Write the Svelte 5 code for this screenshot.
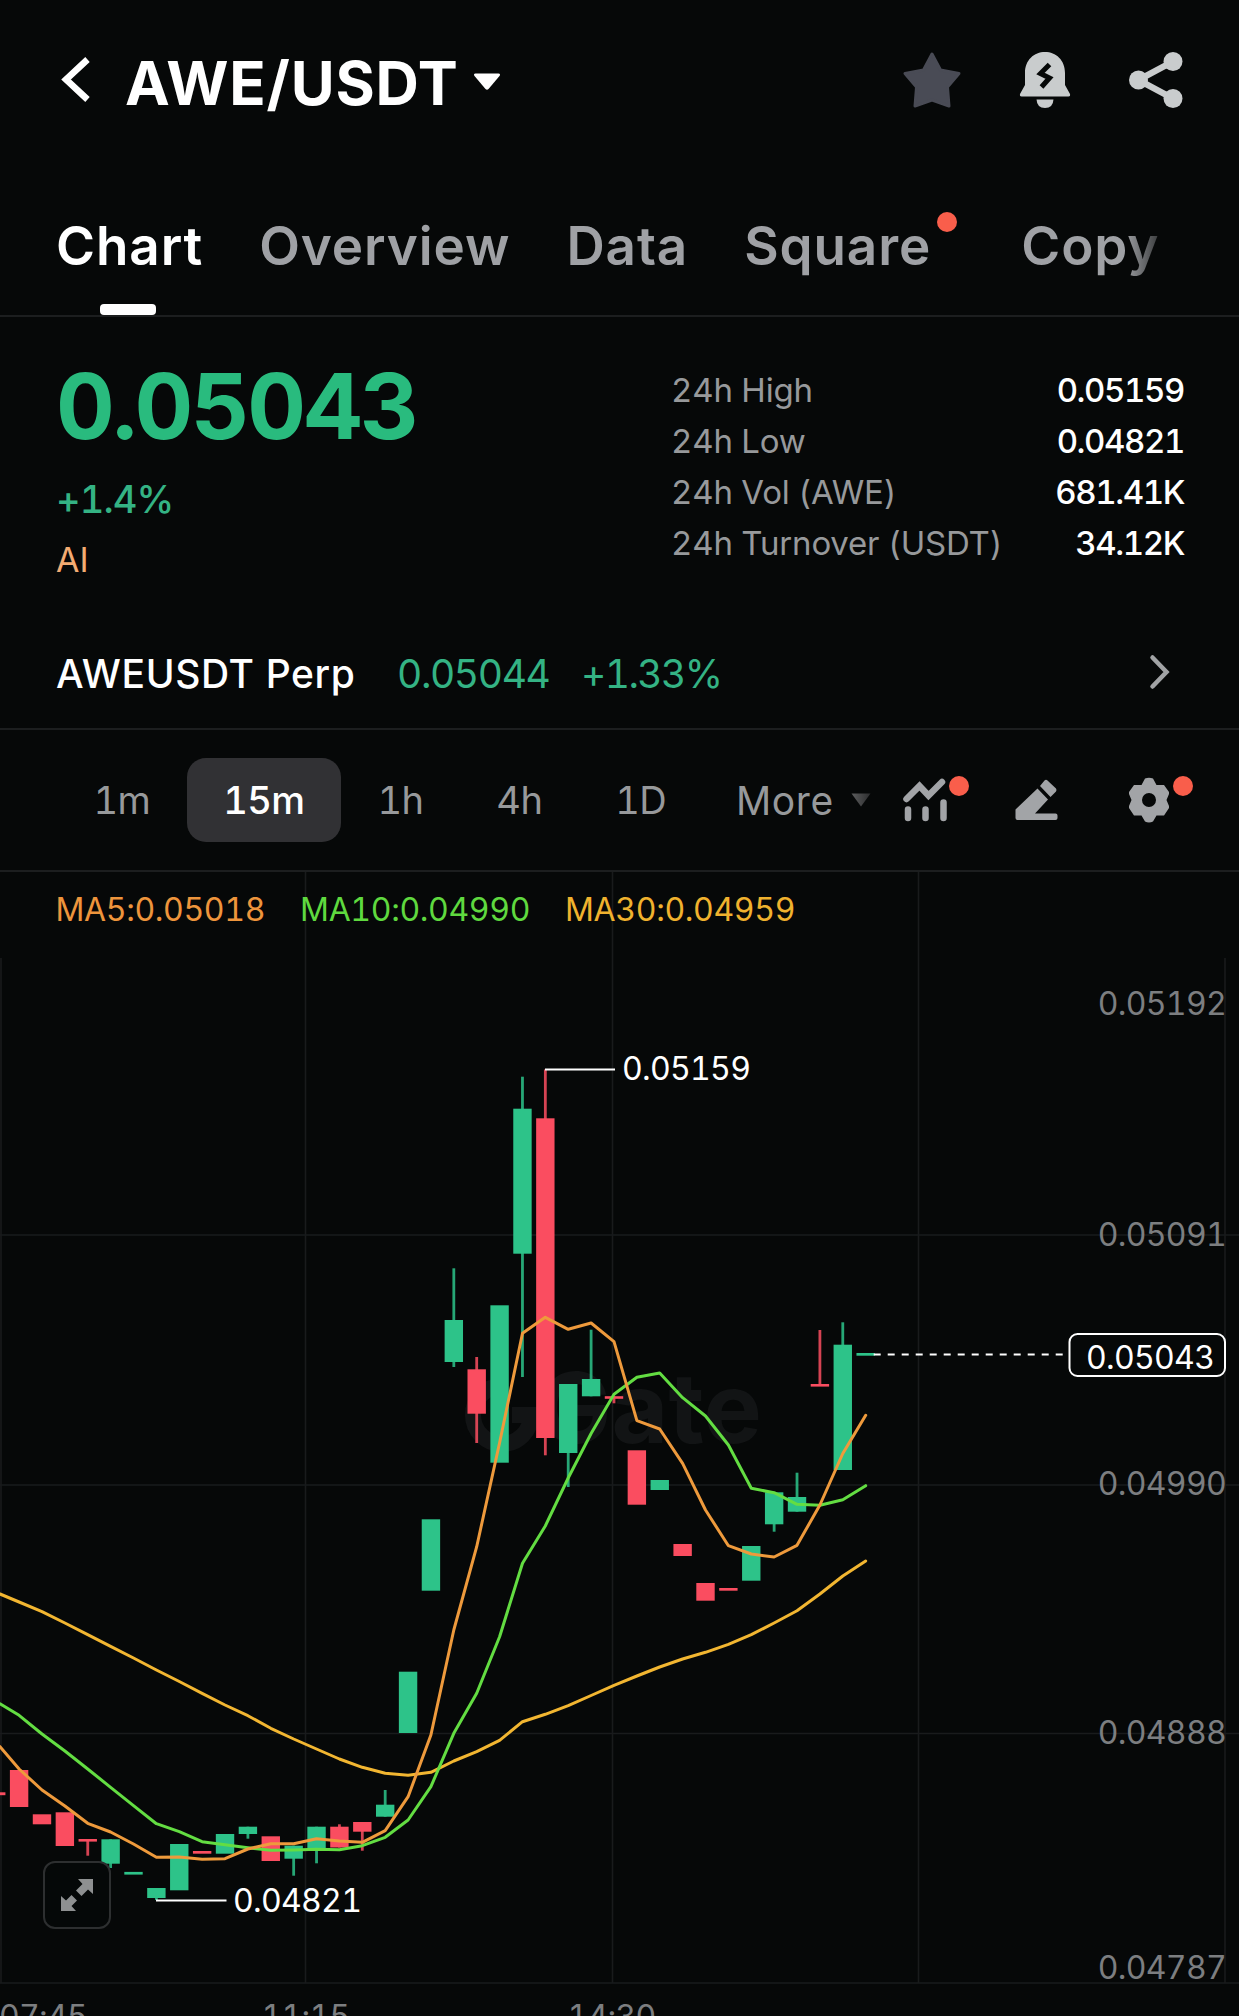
<script>
  const tabs = [
    { name: 'Chart', active: true },
    { name: 'Overview' },
    { name: 'Data' },
    { name: 'Square', dot: true },
    { name: 'Copy', fade: true }
  ];

  const stats = [
    { label: '24h High', value: '0.05159' },
    { label: '24h Low', value: '0.04821' },
    { label: '24h Vol (AWE)', value: '681.41K' },
    { label: '24h Turnover (USDT)', value: '34.12K' }
  ];

  const intervals = ['1m', '15m', '1h', '4h', '1D'];
  let selected = $state('15m');

  const TOP = 872;
  const START = 19.1;
  const STEP = 22.88;
  const BODY = 18.4;

  // [index, up, bodyTop, bodyBottom, wickTop, wickBottom]
  const candles = [
    [-1, 0, 1792.3, 1795.2],
    [0, 0, 1770, 1807],
    [1, 0, 1814.3, 1824.3],
    [2, 0, 1812.3, 1846],
    [3, 0, 1839, 1841.6, 1839, 1855.7],
    [4, 1, 1839.3, 1863.7, 1839.3, 1868],
    [5, 1, 1871.9, 1874.6],
    [6, 1, 1888, 1898, 1888, 1900],
    [7, 1, 1844, 1890.3],
    [8, 0, 1851, 1853.7],
    [9, 1, 1834, 1853.7],
    [10, 1, 1826.7, 1834, 1826.7, 1838.7],
    [11, 0, 1836.3, 1861],
    [12, 1, 1845.7, 1858.7, 1845.7, 1875.7],
    [13, 1, 1826.7, 1849, 1826.7, 1863.3],
    [14, 0, 1826.7, 1847.5, 1824.3, 1847.5],
    [15, 0, 1822, 1831.7, 1822, 1850.7],
    [16, 1, 1804.7, 1816.7, 1790, 1816.7],
    [17, 1, 1671.7, 1733],
    [18, 1, 1519.3, 1590.7],
    [19, 1, 1320, 1362, 1268.3, 1367],
    [20, 0, 1369.3, 1413.7, 1357, 1443],
    [21, 1, 1305.3, 1462.7],
    [22, 1, 1108.7, 1253.7, 1076.7, 1377],
    [23, 0, 1118.3, 1438, 1069.5, 1455.3],
    [24, 1, 1384, 1453, 1384, 1487],
    [25, 1, 1379, 1396.3, 1329.7, 1396.3],
    [26, 0, 1396.2, 1398.8, 1396.2, 1403.3],
    [27, 0, 1450.3, 1504.7],
    [28, 1, 1480, 1490],
    [29, 0, 1544, 1556],
    [30, 0, 1583, 1600.7],
    [31, 0, 1588, 1590.7],
    [32, 1, 1546, 1580.7],
    [33, 1, 1492.3, 1524.3, 1492.3, 1531.7],
    [34, 1, 1497, 1511.7, 1472.7, 1511.7],
    [35, 0, 1384, 1386.6, 1330, 1386],
    [36, 1, 1344.7, 1470, 1322.3, 1470],
    [37, 1, 1353, 1355.7]
  ];

  const ma5 = [
    1746.7, 1769, 1790, 1806, 1823.3, 1832, 1844, 1857.3, 1857, 1859.3, 1858.7, 1849, 1843.7, 1843.7,
    1838.7, 1841, 1842.3, 1830.7, 1796.7, 1735, 1630, 1546.7, 1442.7, 1333.3, 1317.3, 1329.3, 1323,
    1341.7, 1420.7, 1429, 1463.3, 1510, 1545.7, 1554, 1557, 1545.3, 1505, 1453.5, 1415.3
  ];
  const ma10 = [
    1703.7, 1715.3, 1734, 1751, 1769, 1787.3, 1805.7, 1823.7, 1831.7, 1841.7, 1844.7, 1847.7, 1850.3,
    1850, 1849.3, 1849.7, 1845.7, 1837.3, 1820, 1786.7, 1733.3, 1693.3, 1636.7, 1563.3, 1526, 1478,
    1433.5, 1394.3, 1377.3, 1373, 1397.7, 1416, 1445, 1488.3, 1492.7, 1504.3, 1505.3, 1499.7, 1485.7
  ];
  const ma30 = [
    1594, 1602, 1611.7, 1623, 1634.7, 1646.3, 1658, 1670, 1681.5, 1693.3, 1705, 1715.7, 1728.3, 1739,
    1749, 1759, 1767.3, 1773.3, 1775.3, 1772.3, 1761, 1751.7, 1740.3, 1721.7, 1714.3, 1705.7, 1695.5,
    1685.3, 1676, 1667, 1659, 1652.3, 1644.3, 1634.7, 1623, 1610.7, 1594, 1576, 1561
  ];

  const columns = [305.5, 612.5, 918.5];
  const rows = [1235, 1485, 1733.5, 1983];
  const prices = [
    ['0.05192', 1014.5],
    ['0.05091', 1245.5],
    ['0.04990', 1494.5],
    ['0.04888', 1744],
    ['0.04787', 1979]
  ];
  const times = [
    ['07:45', 43],
    ['11:15', 305.5],
    ['14:30', 611.5]
  ];

  const cx = (i) => START + STEP * i;

  // first value sits on the left edge of the chart
  const line = (values) =>
    values.map((y, k) => `${k === 0 ? 0 : cx(k - 1).toFixed(1)},${y}`).join(' ');
</script>

<div class="page">
  <header>
    <svg class="back" width="30" height="47" viewBox="0 0 30 47">
      <path d="M26.500 3.500L5 23.500L26.500 43.500" fill="none" stroke="#fff" stroke-width="6.500" />
    </svg>
    <h1>AWE/USDT</h1>
    <svg class="caret" width="28" height="18" viewBox="0 0 28 18">
      <path d="M2.500 0.500H25.500Q28 1 26.500 3L15.500 16Q14 17.500 12.500 16L1.500 3Q0 1 2.500 0.500Z" fill="#fff" />
    </svg>
    <div class="actions">
      <svg width="60" height="58" viewBox="0 0 60 58">
        <path
          d="M30 3L38.500 19L57 22.500L45.500 36L47 55L30 49L13 55L14.500 36L3 22.500L21.500 19Z"
          fill="#494b55"
          stroke="#494b55"
          stroke-width="3"
          stroke-linejoin="round"
        />
      </svg>
      <svg width="52" height="58" viewBox="0 0 52 58">
        <path d="M6 22C6 9 15 1 26 1S46 9 46 22V34L51 43Q51.500 45.500 49.500 45.500H2.500Q0.500 45.500 1 43L6 34Z" fill="#c9cccd" />
        <path d="M17.500 48.500H34.500Q34 57 26 57T17.500 48.500Z" fill="#c9cccd" />
        <path d="M30.500 13.500L21.500 22.500L30.500 27L22.500 36" fill="none" stroke="#060808" stroke-width="5" />
      </svg>
      <svg width="56" height="58" viewBox="0 0 56 58">
        <path d="M45 10.500L10.500 29L45 47.500" fill="none" stroke="#c9cccd" stroke-width="6.500" />
        <circle cx="45" cy="10.500" r="9.500" fill="#c9cccd" />
        <circle cx="10.500" cy="29" r="9.500" fill="#c9cccd" />
        <circle cx="45" cy="47.500" r="9.500" fill="#c9cccd" />
      </svg>
    </div>
  </header>

  <nav>
    {#each tabs as tab}
      <div class="tab" class:active={tab.active} class:fade={tab.fade} class:wide={tab.dot}>
        {tab.name}
        {#if tab.dot}<i class="dot"></i>{/if}
      </div>
    {/each}
  </nav>

  <section class="summary">
    <div class="quote">
      <div class="price">0.05043</div>
      <div class="change">+1.4%</div>
      <div class="tag">AI</div>
    </div>
    <div class="stats">
      {#each stats as s}
        <div class="stat"><span>{s.label}</span><b>{s.value}</b></div>
      {/each}
    </div>
  </section>

  <section class="perp">
    <span class="perp-name">AWEUSDT Perp</span>
    <span class="perp-price">0.05044</span>
    <span class="perp-change">+1.33%</span>
    <svg width="24" height="38" viewBox="0 0 24 38">
      <path d="M4.500 4.500L18.500 19L4.500 33.500" fill="none" stroke="#a1a3a5" stroke-width="4.500" stroke-linecap="round" />
    </svg>
  </section>

  <section class="toolbar">
    <div class="intervals">
      {#each intervals as name}
        <button class:selected={selected === name} onclick={() => (selected = name)}>{name}</button>
      {/each}
    </div>
    <div class="more">
      More
      <svg width="20" height="14" viewBox="0 0 20 14">
        <defs>
          <linearGradient id="caret" x1="0" x2="1">
            <stop offset="0" stop-color="#5c5d5e" />
            <stop offset="1" stop-color="#2c2d2e" />
          </linearGradient>
        </defs>
        <path d="M0.500 0.500H19.500L10 13.500Z" fill="url(#caret)" />
      </svg>
    </div>
    <div class="tools">
      <div class="tool">
        <svg width="46" height="46" viewBox="0 0 46 46">
          <g fill="none" stroke="#a2a4a7" stroke-width="6.500" stroke-linecap="round" stroke-linejoin="miter">
            <path d="M4.500 22L17.500 9L26.500 18.500L40 5" />
            <path d="M6 32.500V41M23.500 32.500V41M41.500 25.500V41" />
          </g>
        </svg>
        <i class="dot"></i>
      </div>
      <div class="tool">
        <svg width="46" height="46" viewBox="0 0 46 46">
          <path d="M23.500 11.500L34 22.500L21 36.500H41.500Q43.500 36.500 43.500 38.500V41Q43.500 43 41.500 43H3.500Q1.500 43 1.500 41V32.500Z" fill="#a2a4a7" />
          <path d="M26 9L30.500 3.500Q32 2 33.500 3.500L42 11.500Q43 13 42 14.500L36.500 20Z" fill="#a2a4a7" />
        </svg>
      </div>
      <div class="tool">
        <svg width="46" height="46" viewBox="0 0 46 46">
          <path
            fill-rule="evenodd"
            d="M19 1.500Q23 0 27 1.500L30.500 8H38L43 15V17L40.500 23L43 29V31L38 38.500H30.500L27 44.500Q23 46.500 19 44.500L15.500 38.500H8L3 31V29L5.500 23L3 17V15L8 8H15.500ZM23 16A7 7 0 1 0 23 30A7 7 0 1 0 23 16Z"
            fill="#a2a4a7"
          />
        </svg>
        <i class="dot"></i>
      </div>
    </div>
  </section>

  <section class="chart">
    <svg class="plot" width="1239" height="1144" viewBox="0 {TOP} 1239 1144">
      <g class="grid">
        {#each columns as x}
          <line x1={x} x2={x} y1={TOP} y2="1983" />
        {/each}
        <line x1="1" x2="1" y1="958" y2="1983" />
        <line x1="1225" x2="1225" y1="958" y2="1983" />
        {#each rows as y}
          <line x1="0" x2="1239" y1={y} y2={y} />
        {/each}
      </g>

      <g class="watermark">
        <path d="M502 1386A29 29 0 1 0 531 1415H512" />
        <text x="538" y="1443">Gate</text>
      </g>

      {#each candles as [i, up, top, bottom, high, low]}
        <g class={up ? 'up' : 'down'}>
          {#if high}
            <rect x={cx(i) - 1.4} y={high} width="2.8" height={low - high} opacity="0.85" />
          {/if}
          <rect x={cx(i) - BODY / 2} y={top} width={BODY} height={bottom - top} />
        </g>
      {/each}

      <polyline points={line(ma30)} stroke="#f2b631" />
      <polyline points={line(ma10)} stroke="#63dd42" />
      <polyline points={line(ma5)} stroke="#ee9a3c" />

      <path class="leader" d="M545 1069.500H615" />
      <text class="mark" x="622" y="1079.500">0.05159</text>
      <path class="leader" d="M156 1900.500H226.500" />
      <text class="mark" x="233" y="1912">0.04821</text>

      <line class="last" x1="873.700" x2="1064" y1="1354.500" y2="1354.500" />

      {#each prices as [label, y]}
        <text class="axis" x="1226" {y} text-anchor="end">{label}</text>
      {/each}
      <rect x="1069.500" y="1334" width="155.500" height="42" rx="8" fill="#060808" stroke="#fff" stroke-width="2" />
      <text class="mark" x="1086" y="1368.500">0.05043</text>

      {#each times as [label, x]}
        <text class="axis" {x} y="2027.500" text-anchor="middle">{label}</text>
      {/each}
    </svg>

    <div class="legend">
      <span class="ma5">MA5:0.05018</span>
      <span class="ma10">MA10:0.04990</span>
      <span class="ma30">MA30:0.04959</span>
    </div>

    <div class="expand">
      <svg width="34" height="34" viewBox="0 0 34 34">
        <path
          d="M18 1H33V16L28 11.500L21.500 18L16 12.500L22.500 6ZM1 18L6 22.500L11.500 17L17 22.500L11.500 28L16 33H1Z"
          fill="#8e9091"
        />
      </svg>
    </div>
  </section>
</div>

<style>
  :global(body) {
    margin: 0;
    background: #060808;
  }

  .page {
    width: 1239px;
    height: 2016px;
    overflow: hidden;
    background: #060808;
    color: #fff;
    font-family: Inter, "Liberation Sans", sans-serif;
    font-feature-settings: "tnum";
    white-space: nowrap;
  }

  svg {
    display: block;
    flex: none;
  }

  header {
    display: flex;
    align-items: center;
    height: 159px;
    padding: 0 55px 0 61px;
  }

  h1 {
    margin: 6px 0 0 34px;
    width: 336px;
    font-size: 60px;
    font-weight: 700;
    line-height: 70px;
    letter-spacing: 0.8px;
  }

  .caret {
    margin: 4px 0 0 12px;
  }

  .actions {
    display: flex;
    gap: 57px;
    margin-left: auto;
  }

  nav {
    display: flex;
    height: 156px;
    padding-left: 56px;
    border-bottom: 2px solid #1c1e1f;
    gap: 56px;
  }

  .tab {
    position: relative;
    padding-top: 55px;
    font-size: 53px;
    font-weight: 600;
    line-height: 64px;
    letter-spacing: 0.9px;
    color: #9fa1a5;
  }

  .tab.active {
    color: #fff;
  }

  .tab.active::after {
    content: "";
    position: absolute;
    left: 44px;
    bottom: 0;
    width: 56px;
    height: 11px;
    border-radius: 4px;
    background: #fff;
  }

  .tab.wide {
    padding-right: 34px;
  }

  .tab.fade {
    color: transparent;
    background: linear-gradient(90deg, #9fa1a5 75%, #3b3d3e 100%);
    background-clip: text;
  }

  .dot {
    position: absolute;
    width: 20px;
    height: 20px;
    border-radius: 50%;
    background: #f95e4b;
  }

  .tab .dot {
    right: 8px;
    top: 53px;
  }

  .summary {
    display: flex;
    justify-content: space-between;
    height: 307px;
    padding: 0 55px 0 56px;
  }

  .price {
    margin-top: 41px;
    font-size: 91px;
    font-weight: 700;
    line-height: 96px;
    letter-spacing: -2.4px;
    color: #29bb7e;
  }

  .change {
    margin-top: 22px;
    font-size: 38px;
    font-weight: 500;
    line-height: 46px;
    letter-spacing: -0.9px;
    color: #34b384;
  }

  .tag {
    margin-top: 18px;
    font-size: 34px;
    line-height: 40px;
    color: #f3ab72;
  }

  .stats {
    width: 513px;
    padding-top: 48px;
  }

  .stat {
    display: flex;
    justify-content: space-between;
    font-size: 33px;
    line-height: 51px;
    letter-spacing: -0.2px;
    color: #97999b;
  }

  .stat b {
    font-weight: 500;
    letter-spacing: -1.4px;
    color: #fff;
  }

  .perp {
    display: flex;
    align-items: center;
    height: 104px;
    padding: 0 67px 0 56px;
    border-bottom: 2px solid #1c1e1f;
    font-size: 39px;
    line-height: 100px;
  }

  .perp span {
    margin-top: -4px;
  }

  .perp-name {
    width: 341px;
    font-weight: 500;
    letter-spacing: 0.6px;
  }

  .perp-price {
    width: 184px;
    letter-spacing: -1.4px;
    color: #34b384;
  }

  .perp-change {
    letter-spacing: -1.6px;
    color: #34b384;
  }

  .perp svg {
    margin: -9px 0 0 auto;
  }

  .toolbar {
    display: flex;
    align-items: center;
    height: 140px;
    border-bottom: 2px solid #1c1e1f;
    padding: 0 67px 0 57px;
  }

  .intervals {
    display: flex;
    width: 679px;
  }

  .intervals button {
    height: 84px;
    padding: 0 36.5px;
    border: 0;
    border-radius: 19px;
    background: none;
    font: inherit;
    font-feature-settings: inherit;
    font-size: 38px;
    letter-spacing: -0.6px;
    color: #97999b;
  }

  .intervals button.selected {
    background: #313134;
    color: #fff;
    font-weight: 500;
  }

  .more {
    display: flex;
    align-items: center;
    gap: 17px;
    font-size: 39px;
    letter-spacing: 0.6px;
    color: #97999b;
  }

  .tools {
    display: flex;
    gap: 66px;
    margin-left: auto;
  }

  .tool {
    position: relative;
  }

  .tool .dot {
    left: 47px;
    top: -1px;
  }

  .chart {
    position: relative;
  }

  .grid line {
    stroke: #191b1c;
    stroke-width: 1.6;
  }

  .watermark path {
    fill: none;
    stroke: #121415;
    stroke-width: 16;
  }

  .watermark text {
    fill: #121415;
    font-size: 98px;
    font-weight: 700;
  }

  polyline {
    fill: none;
    stroke-width: 3;
    stroke-linejoin: round;
    stroke-linecap: round;
  }

  .up {
    fill: #2dc389;
  }

  .down {
    fill: #fa4d60;
  }

  .leader {
    stroke: #fff;
    stroke-width: 2;
  }

  .last {
    stroke: #fff;
    stroke-width: 2;
    stroke-dasharray: 7 7;
  }

  .mark {
    fill: #fff;
    font-size: 32px;
    letter-spacing: -0.7px;
  }

  .axis {
    fill: #7c7e80;
    font-size: 32px;
    letter-spacing: -0.7px;
  }

  .legend {
    position: absolute;
    left: 55.5px;
    top: 18px;
    display: flex;
    gap: 35px;
    font-size: 32px;
    line-height: 40px;
    letter-spacing: -0.35px;
  }

  .ma5 {
    color: #ee953c;
  }

  .ma10 {
    color: #5fd93f;
  }

  .ma30 {
    color: #f0b22e;
  }

  .expand {
    position: absolute;
    left: 43px;
    top: 989px;
    display: flex;
    align-items: center;
    justify-content: center;
    width: 64px;
    height: 64px;
    border: 2.500px solid #2d2f30;
    border-radius: 12px;
    background: #060808e0;
  }
</style>
